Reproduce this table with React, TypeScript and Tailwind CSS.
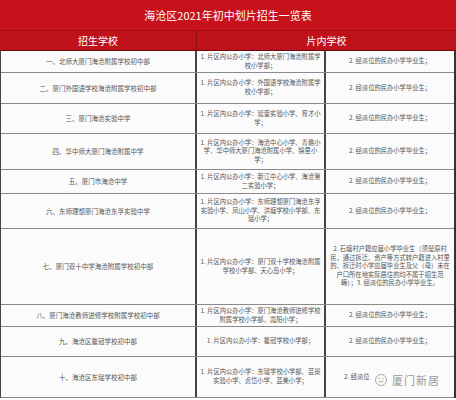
import React from "react";

type Row = { h: string; a: string; b: React.ReactNode; c: React.ReactNode; left?: boolean };

const rows: Row[] = [
  { h: "h-[22px]", a: "一、北师大厦门海沧附属学校初中部", b: "1. 片区内公办小学：北师大厦门海沧附属学校小学部；", c: "2. 经派位的民办小学毕业生；" },
  { h: "h-[31px]", a: "二、厦门外国语学校海沧附属学校初中部", b: "1. 片区内公办小学：外国语学校海沧附属学校小学部；", c: "2. 经派位的民办小学毕业生；" },
  { h: "h-[30px]", a: "三、厦门海沧实验中学", b: "1. 片区内公办小学：延奎实验小学、育才小学；", c: "2. 经派位的民办小学毕业生；" },
  { h: "h-[36px]", a: "四、华中师大厦门海沧附属中学", b: "1. 片区内公办小学：海沧中心小学、青礁小学、华中师大厦门海沧附属小学、锦里小学；", c: "2. 经派位的民办小学毕业生；" },
  { h: "h-[24px]", a: "五、厦门市海沧中学", b: "1. 片区内公办小学：新江中心小学、海沧第二实验小学；", c: "2. 经派位的民办小学毕业生；" },
  { h: "h-[35px]", a: "六、东师理想厦门海沧东孚实验中学", b: "1. 片区内公办小学：东师理想厦门海沧东孚实验小学、凤山小学、洪塘学校小学部、东瑶小学；", c: "2. 经派位的民办小学毕业生；" },
  {
    h: "h-[76px]",
    a: "七、厦门双十中学海沧附属学校初中部",
    b: "1. 片区内公办小学：厦门双十学校海沧附属学校小学部、天心岛小学；",
    c: "2. 石塘村户籍应届小学毕业生（须是原村民，通过拆迁、资产等方式转户籍进入村里的、拆迁时小学应届毕业生及父（母）未在户口所在地实际居住的均不属于招生范畴）；3. 经派位的民办小学毕业生。",
  },
  { h: "h-[22px]", a: "八、厦门海沧教师进修学校附属学校初中部", b: "1. 片区内公办小学：厦门海沧教师进修学校附属学校小学部、霞阳小学；", c: "2. 经派位的民办小学毕业生；" },
  { h: "h-[30px]", a: "九、海沧区鳌冠学校初中部", b: "1. 片区内公办小学：鳌冠学校小学部；", c: "2. 经派位的民办小学毕业生；" },
  { h: "h-[41px]", a: "十、海沧区东瑶学校初中部", b: "1. 片区内公办小学：东瑶学校小学部、芸景实验小学、贞岱小学、芸美小学；", c: "2. 经派位", left: true },
];

export default function App() {
  return (
    <div
      className="w-[456px] h-[400px] bg-white overflow-hidden relative"
      style={{ fontFamily: '"Noto Sans CJK SC", "Noto Sans", sans-serif' }}
    >
      <div className="h-[31px] bg-[#c8121b] flex items-center justify-center text-white text-[11px] border-b border-[#a40d14]">
        海沧区2021年初中划片招生一览表
      </div>
      <div className="h-[20px] bg-[#bf111a] flex text-white text-[10px] border-b border-[#6b0a0e]">
        <div className="w-[197px] flex items-center justify-center border-r border-[#8e0c12]">招生学校</div>
        <div className="flex-1 flex items-center justify-center">片内学校</div>
      </div>
      <div className="border-l border-[#444] border-r-2 border-r-[#333]">
        {rows.map((r, i) => (
          <div key={i} className={`${r.h} flex border-b border-[#8a8a8a] bg-[#fbfbfb] text-[#555] text-[6.3px] leading-[8.6px]`}>
            <div className="w-[196px] flex items-center justify-center text-center border-r-2 border-[#444] px-[2px] text-[6.5px]">
              {r.a}
            </div>
            <div className="w-[129px] flex items-center justify-center text-center border-r-2 border-[#444] px-[1px]">
              <span>{r.b}</span>
            </div>
            <div className={r.left ? "flex-1 flex items-center justify-start pl-[18px]" : "flex-1 flex items-center justify-center text-center px-[3px]"}>
              <span>{r.c}</span>
            </div>
          </div>
        ))}
      </div>
      <div className="absolute left-[374px] top-[372px] flex items-center gap-[2px] text-[#9a9a9a]">
        <svg width="16" height="14" viewBox="0 0 16 14">
          <circle cx="7" cy="7" r="5.5" fill="none" stroke="#aaa" strokeWidth="1" />
          <path d="M4.5 8 Q7 10.5 9.5 8" fill="none" stroke="#aaa" strokeWidth="1" />
          <circle cx="5" cy="5.5" r="0.7" fill="#aaa" />
          <circle cx="9" cy="5.5" r="0.7" fill="#aaa" />
        </svg>
        <span className="text-[11px] tracking-[1px]">厦门新居</span>
      </div>
    </div>
  );
}
